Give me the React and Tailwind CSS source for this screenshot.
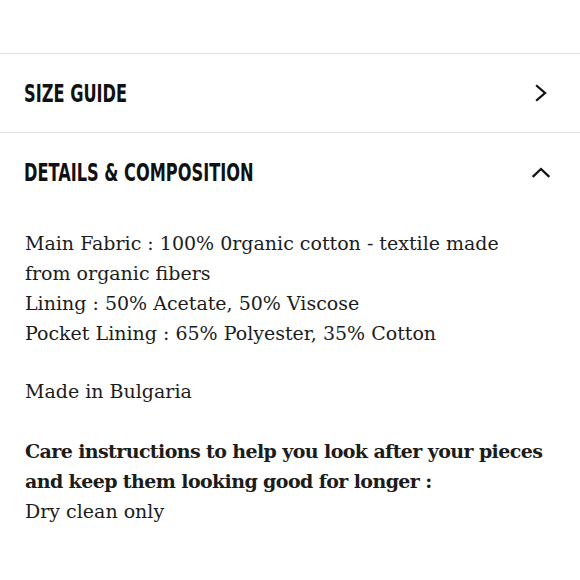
const heading = "inline-block origin-left scale-x-[0.72] whitespace-nowrap font-['DejaVu_Sans_Condensed','DejaVu_Sans',sans-serif] font-stretch-condensed font-bold uppercase text-[25px] leading-none text-[#111]";

const ChevronRight = () => (
    <svg width="12" height="18" viewBox="0 0 12 18" fill="none" stroke="#111" strokeWidth="2.3" strokeLinecap="square">
        <polyline points="2,2 10,9 2,16" />
    </svg>
);

const ChevronUp = () => (
    <svg width="20" height="12" viewBox="0 0 20 12" fill="none" stroke="#111" strokeWidth="2.3" strokeLinecap="square">
        <polyline points="2.5,10 10,3 17.5,10" />
    </svg>
);

const Row = ({ title, open }) => (
    <div className="flex items-center justify-between pl-[24px] h-[78px]">
        <span className={heading}>{title}</span>
        <div className={open ? "mr-[29px]" : "mr-[33px]"}>{open ? <ChevronUp /> : <ChevronRight />}</div>
    </div>
);

export default function App() {
    return (
        <div className="w-[580px] h-[580px] bg-white overflow-hidden">
            <div className="h-[53px]" />
            <div className="border-t border-[#e2e2e2]">
                <Row title="Size Guide" />
            </div>
            <div className="border-t border-[#e2e2e2]">
                <Row title="Details & Composition" open />
                <div className="pl-[25px] pr-[35px] pt-[17px] font-['DejaVu_Serif',serif] text-[19px] leading-[30px] text-[#1c1c1c]">
                    <p>Main Fabric : 100% 0rganic cotton - textile made from organic fibers</p>
                    <p>Lining : 50% Acetate, 50% Viscose</p>
                    <p>Pocket Lining : 65% Polyester, 35% Cotton</p>
                    <p className="mt-[28px]">Made in Bulgaria</p>
                    <p className="mt-[30px] font-bold tracking-[-0.6px]">Care instructions to help you look after your pieces and keep them looking good for longer :</p>
                    <p>Dry clean only</p>
                </div>
            </div>
        </div>
    );
}
